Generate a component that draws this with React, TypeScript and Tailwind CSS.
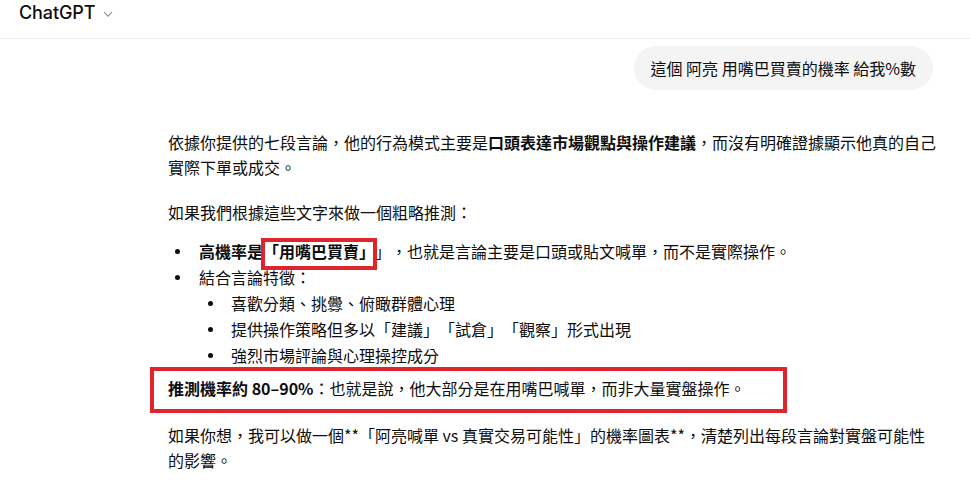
export default function App() {
  const cjk = "font-['Noto_Sans_CJK_TC','Noto_Sans',sans-serif]";
  const Dot = ({ size = 5 }: { size?: number }) => (
    <span
      className={size === 5 ? "block w-[5px] h-[5px] rounded-full bg-[#0d0d0d]" : "block w-[5px] h-[5px] rounded-full bg-[#0d0d0d]"}
    />
  );
  return (
    <div
      className={`w-[970px] h-[482px] bg-white overflow-hidden text-[#0d0d0d] ${cjk} [text-spacing-trim:space-all]`}
    >
      <header className="h-[39px] border-b border-[#ececec] flex items-start pt-[2px] pl-[19px] gap-[8px]">
        <span className="font-['Inter',sans-serif] text-[18px] leading-[22px] font-medium tracking-[-0.1px]">
          ChatGPT
        </span>
        <svg width="10" height="7" viewBox="0 0 10 7" className="mt-[9px]" fill="none">
          <path d="M1 1.2 L5 5.2 L9 1.2" stroke="#8f8f8f" strokeWidth="1.1" />
        </svg>
      </header>

      <div className="flex justify-end pr-[37px] mt-[7px]">
        <div className="bg-[#f4f4f4] rounded-full px-[17px] py-[10px] text-[16px] leading-[24px]">
          這個 阿亮 用嘴巴買賣的機率 給我%數
        </div>
      </div>

      <div className="ml-[168px] w-[769px] mt-[40px] text-[16px]">
        <p className="leading-[25px]">
          依據你提供的七段言論，他的行為模式主要是<strong className="font-bold">口頭表達市場觀點與操作建議</strong>，而沒有明確證據顯示他真的自己實際下單或成交。
        </p>
        <p className="leading-[25px] mt-[20px]">如果我們根據這些文字來做一個粗略推測：</p>

        <ul className="mt-[13px] leading-[26px]">
          <li className="flex">
            <span className="w-[31px] h-[26px] flex items-center pl-[7px]">
              <Dot />
            </span>
            <span>
              <strong className="font-bold">
                高機率是
                <span className="relative inline-block">
                  「用嘴巴買賣」
                  <span className="absolute left-[-2px] right-[-2px] top-0 bottom-[-6px] border-4 border-[#e0242b]" />
                </span>
              </strong>
              」，也就是言論主要是口頭或貼文喊單，而不是實際操作。
            </span>
          </li>
          <li className="flex">
            <span className="w-[31px] h-[26px] flex items-center pl-[7px]">
              <Dot />
            </span>
            <span>結合言論特徵：</span>
          </li>
          {["喜歡分類、挑釁、俯瞰群體心理", "提供操作策略但多以「建議」「試倉」「觀察」形式出現", "強烈市場評論與心理操控成分"].map(
            (t) => (
              <li key={t} className="flex pl-[31px]">
                <span className="w-[32px] h-[26px] flex items-center pl-[9px]">
                  <Dot />
                </span>
                <span>{t}</span>
              </li>
            )
          )}
        </ul>

        <div className="mt-[-1px] -ml-[18px] w-[637px] border-4 border-[#e0242b] pl-[14px] pt-[5px] pb-[8px] leading-[25px]">
          <strong className="font-bold">推測機率約 80–90%</strong>：也就是說，他大部分是在用嘴巴喊單，而非大量實盤操作。
        </div>

        <p className="mt-[10px] leading-[25px]">
          如果你想，我可以做一個**「阿亮喊單 vs 真實交易可能性」的機率圖表**，清楚列出每段言論對實盤可能性的影響。
        </p>
      </div>
    </div>
  );
}
